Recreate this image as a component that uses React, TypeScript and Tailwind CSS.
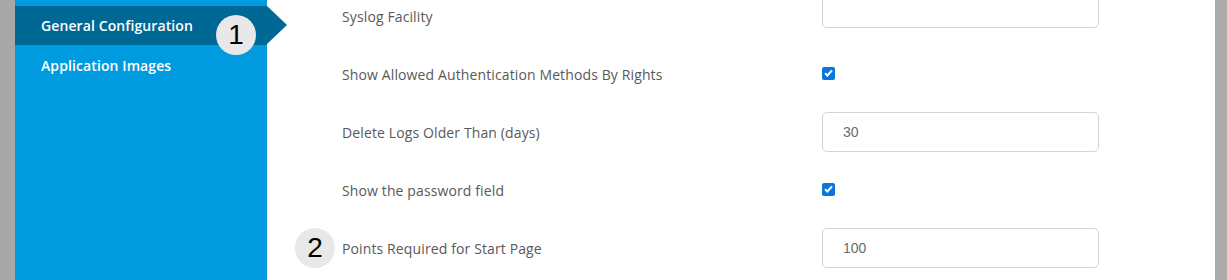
import React from "react";

const font = { fontFamily: "'Open Sans', 'Noto Sans', Arial, sans-serif" };

function Badge({ n, className }: { n: string; className: string }) {
  return (
    <div
      className={`absolute w-[40px] h-[40px] rounded-full bg-[#e8e8e8] flex items-center justify-center text-[28px] font-normal leading-none text-black ${className}`}
      style={{ fontFamily: "'Liberation Sans', Arial, sans-serif" }}
    >
      {n}
    </div>
  );
}

function TextInput({ value }: { value: string }) {
  return (
    <div
      className="w-[277px] h-[40px] border border-[#d4d4d4] rounded-[5px] bg-white flex items-center pl-[20px] text-[14px] text-[#6b6b6b]"
      style={{ fontFamily: "'Liberation Sans', Arial, sans-serif" }}
    >
      {value}
    </div>
  );
}

function Check() {
  return (
    <div className="w-[13px] h-[13px] rounded-[2px] bg-[#0b76d9] flex items-center justify-center">
      <svg width="9" height="8" viewBox="0 0 9 8">
        <path d="M1 4.2 L3.4 6.5 L8 1.3" stroke="white" strokeWidth="2" fill="none" />
      </svg>
    </div>
  );
}

function Row({ label, children, badge }: { label: string; children?: React.ReactNode; badge?: React.ReactNode }) {
  return (
    <div className="relative h-[58px] flex items-center pl-[75px]">
      {badge}
      <div className="w-[480px] text-[14px] tracking-[0.12px] text-[#595959]">{label}</div>
      <div className="flex items-center">{children}</div>
    </div>
  );
}

export default function App() {
  return (
    <div className="flex h-[280px] w-[1227px] overflow-hidden bg-white" style={font}>
      <div className="w-[15px] shrink-0 bg-[#a8a8a8]" />
      <div className="relative w-[252px] shrink-0 bg-[#009bdf] pt-[6px] z-10">
        <div className="relative h-[39px] bg-[#006894] flex items-center pl-[26px] text-[14px] font-semibold tracking-[0.1px] text-white">
          General Configuration
          <div className="absolute right-[-20px] top-0 w-0 h-0 border-y-[19.5px] border-y-transparent border-l-[20px] border-l-[#006894]" />
          <Badge n="1" className="left-[201px] top-[9px]" />
        </div>
        <div className="h-[40px] flex items-center pl-[26px] text-[14px] font-semibold tracking-[0.1px] text-white">
          Application Images
        </div>
      </div>
      <div className="flex-1 mt-[-13px]">
        <Row label="Syslog Facility">
          <div className="mt-[-16px]"><TextInput value="" /></div>
        </Row>
        <Row label="Show Allowed Authentication Methods By Rights">
          <div className="mt-[-2px]"><Check /></div>
        </Row>
        <Row label="Delete Logs Older Than (days)">
          <TextInput value="30" />
        </Row>
        <Row label="Show the password field">
          <div className="mt-[-2px]"><Check /></div>
        </Row>
        <Row label="Points Required for Start Page" badge={<Badge n="2" className="left-[28px] top-[9px]" />}>
          <TextInput value="100" />
        </Row>
      </div>
      <div className="w-[12px] shrink-0 bg-[#ababab]" />
    </div>
  );
}
